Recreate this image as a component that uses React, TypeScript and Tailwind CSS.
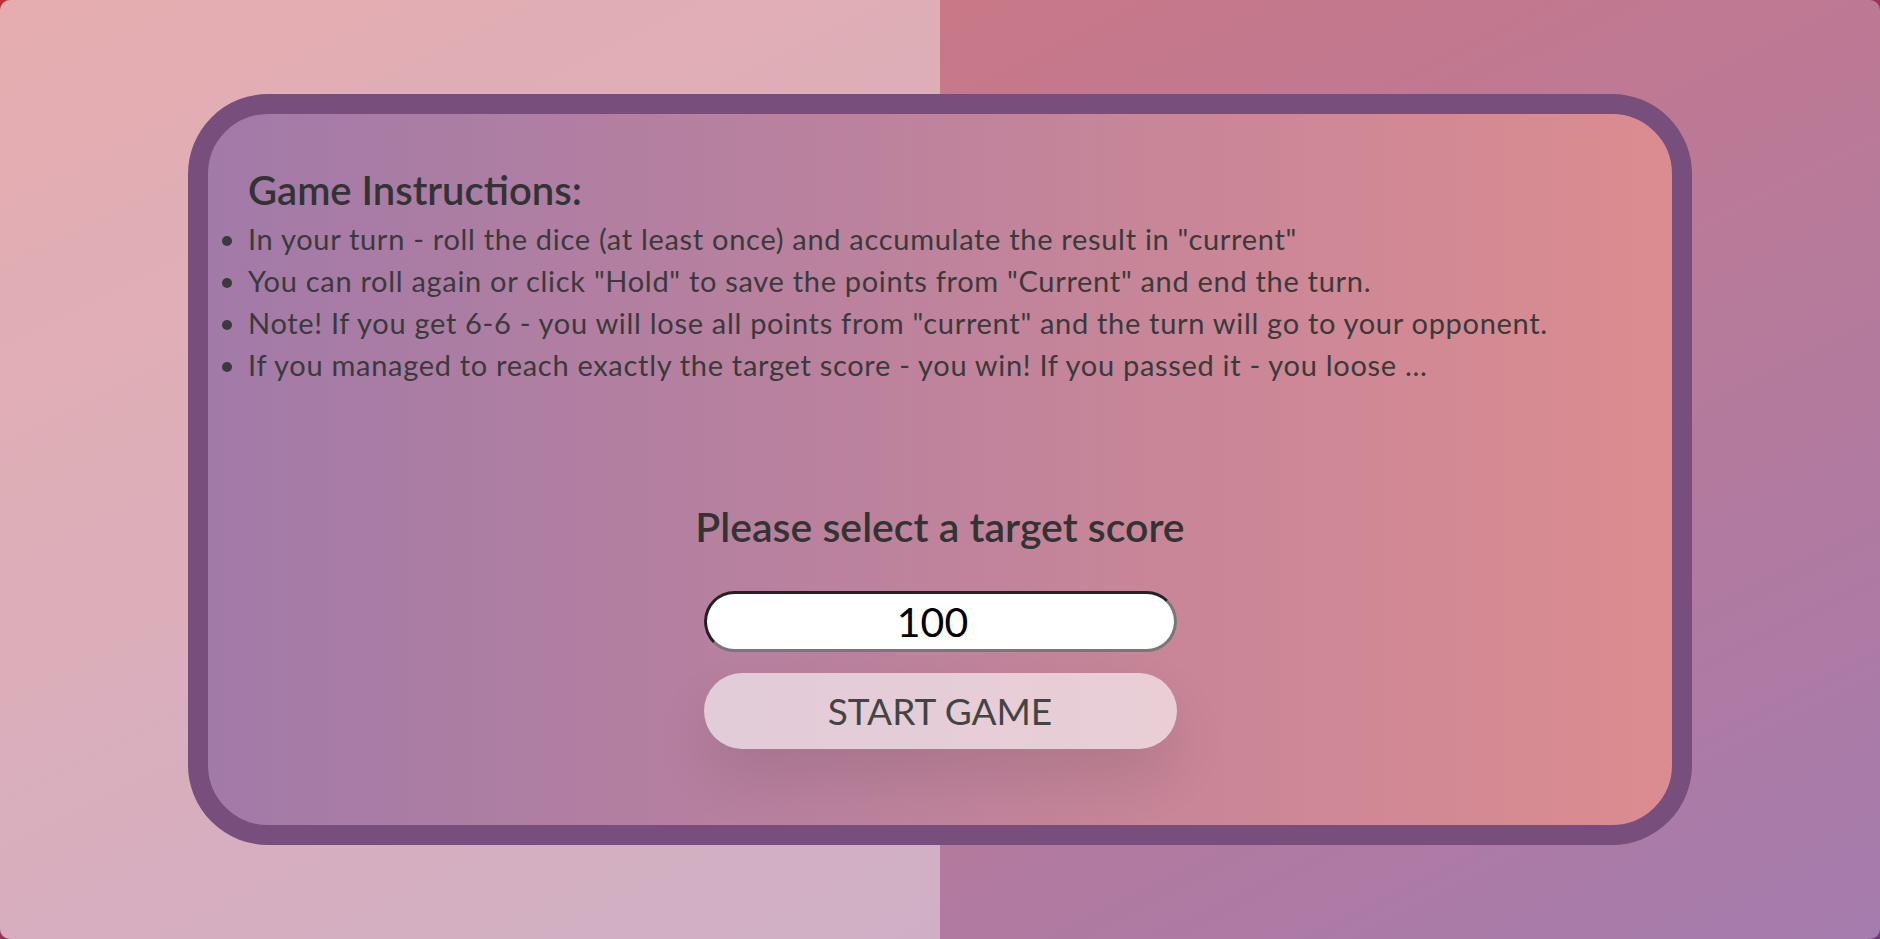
import React from "react";

export default function App() {
  return (
    <div
      className="w-full h-[939px] bg-[linear-gradient(to_top_left,#753682_0%,#bf2e34_100%)] overflow-hidden"
      style={{ fontFamily: "Lato, 'Noto Sans', sans-serif" }}
    >
      <main className="relative w-full h-full rounded-[10px] overflow-hidden flex bg-white/35">
        <section className="flex-1 bg-white/40" />
        <section className="flex-1" />

        <div className="absolute left-[10%] top-[10%] w-[80%] h-[80%] rounded-[80px] border-[20px] border-[#784e7c] bg-[linear-gradient(to_right,#a27aa8,#dc8c90)] flex flex-col">
          <div className="pl-10 pt-[52px] text-[#333]">
            <h3 className="text-[40px] font-semibold leading-[1.2] mb-[4px]">Game Instructions:</h3>
            <ul className="list-disc text-[29px] tracking-[0.7px] leading-[42px] text-[#3a3a3a]">
              <li>In your turn - roll the dice (at least once) and accumulate the result in "current"</li>
              <li>You can roll again or click "Hold" to save the points from "Current" and end the turn.</li>
              <li>Note! If you get 6-6 - you will lose all points from "current" and the turn will go to your opponent.</li>
              <li>If you managed to reach exactly the target score - you win! If you passed it - you loose ...</li>
            </ul>
          </div>

          <div className="flex flex-col items-center mt-[116px]">
            <h2 className="text-[41px] font-semibold text-[#333] leading-[1.2]">Please select a target score</h2>
            <input
              type="text"
              readOnly
              value="100"
              className="mt-[40px] w-[473px] h-[61px] rounded-full bg-white text-black text-center text-[41px] pr-[15px] border-[3px] border-t-[#222] border-l-[#222] border-r-[#777] border-b-[#777] outline-none"
            />
            <button className="mt-[21px] w-[473px] h-[76px] rounded-full bg-white/60 text-[#444] text-[37px] uppercase shadow-[0_28px_56px_rgba(0,0,0,0.1)]">
              Start Game
            </button>
          </div>
        </div>
      </main>
    </div>
  );
}
